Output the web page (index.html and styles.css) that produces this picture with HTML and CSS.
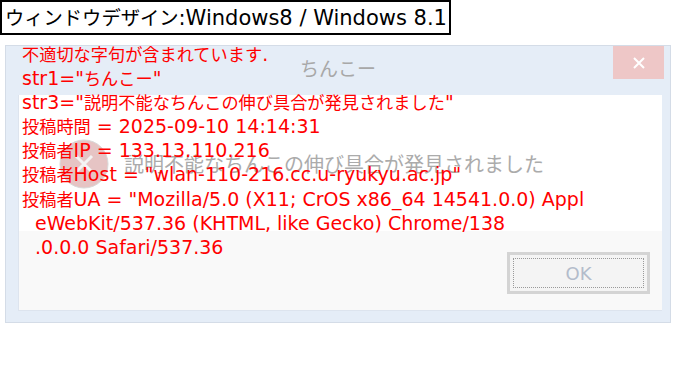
FILE: index.html
```html
<!DOCTYPE html>
<html lang="ja">
<head>
<meta charset="utf-8">
<link rel="stylesheet" href="styles.css">
</head>
<body>
<div class="label"><span class="j">ウィンドウデザイン</span>:Windows8 / Windows 8.1</div>
<div class="dialog">
  <div class="titlebar">
    <span class="title">ちんこー</span>
    <span class="close">
      <svg width="14" height="12" viewBox="0 0 14 12"><path d="M2 1 L12 11 M12 1 L2 11" stroke="#fff" stroke-width="2"/></svg>
    </span>
  </div>
  <div class="content">
    <div class="body">
      <svg class="icon" width="50" height="50" viewBox="0 0 50 50">
        <circle cx="25" cy="25" r="24" fill="#e6c4c4" stroke="#d9d9d9" stroke-width="1"/>
        <path d="M17 17 L33 33 M33 17 L17 33" stroke="#f4f4f4" stroke-width="3"/>
      </svg>
      <span class="msg">説明不能なちんこの伸び具合が発見されました</span>
    </div>
    <div class="footer">
      <button class="ok"><span class="focus">OK</span></button>
    </div>
  </div>
  <div class="alert">
    <div><span class="j">不適切な字句が含まれています</span>.</div>
    <div>str1="<span class="j">ちんこー</span>"</div>
    <div>str3="<span class="j">説明不能なちんこの伸び具合が発見されました</span>"</div>
    <div><span class="j">投稿時間</span> = 2025-09-10 14:14:31</div>
    <div><span class="j">投稿者</span>IP = 133.13.110.216</div>
    <div><span class="j">投稿者</span>Host = "wlan-110-216.cc.u-ryukyu.ac.jp"</div>
    <div><span class="j">投稿者</span>UA = "Mozilla/5.0 (X11; CrOS x86_64 14541.0.0) Appl</div>
    <div class="cont">eWebKit/537.36 (KHTML, like Gecko) Chrome/138</div>
    <div class="cont">.0.0.0 Safari/537.36</div>
  </div>
</div>
</body>
</html>
```

FILE: styles.css
```css
html, body {
  margin: 0;
  padding: 0;
  background: #fff;
}
body {
  font-family: "DejaVu Sans", "Noto Sans CJK JP", sans-serif;
  width: 680px;
  height: 368px;
  overflow: hidden;
}
.j {
  font-family: "Noto Sans CJK JP", sans-serif;
}
.label {
  display: inline-block;
  border: 2px solid #000;
  font-size: 21px;
  line-height: 30px;
  padding: 0 2px 0 3px;
  color: #000;
  white-space: nowrap;
}
.label .j {
  font-size: 19.3px;
}
.dialog {
  position: relative;
  margin: 10px 0 0 5px;
  width: 664px;
  height: 276px;
  background: #e5edf7;
  border: 1px solid #d4dce7;
  display: flex;
  flex-direction: column;
}
.titlebar {
  height: 49px;
  display: flex;
  justify-content: center;
  align-items: flex-start;
}
.title {
  margin-top: 10px;
  font-family: "Noto Sans CJK JP", sans-serif;
  font-size: 19px;
  line-height: 24px;
  color: #a8a8a8;
}
.close {
  position: absolute;
  top: 0;
  right: 6px;
  width: 51px;
  height: 33px;
  background: #eec7c7;
  display: flex;
  align-items: center;
  justify-content: center;
}
.content {
  margin: 0 8px 11px 12px;
  flex: 1;
  display: flex;
  flex-direction: column;
  border-left: 1px solid #dde4ee;
  border-bottom: 1px solid #dde4ee;
}
.body {
  height: 136px;
  background: #fff;
  display: flex;
  align-items: center;
  padding-left: 40px;
}
.icon {
  margin-top: 2px;
  flex: none;
}
.msg {
  margin-left: 15px;
  font-family: "Noto Sans CJK JP", sans-serif;
  font-size: 20px;
  color: #ababab;
}
.footer {
  flex: 1;
  background: #f9f9f9;
  display: flex;
  justify-content: flex-end;
  align-items: flex-start;
  padding: 21px 12px 0 0;
}
.ok {
  width: 143px;
  height: 42px;
  border: 3px solid #d4d4d4;
  background: #f4f4f4;
  padding: 3px;
  margin: 0;
  display: flex;
}
.focus {
  flex: 1;
  border: 1px dotted #9a9a9a;
  display: flex;
  align-items: center;
  justify-content: center;
  font-family: "DejaVu Sans", sans-serif;
  font-size: 18px;
  color: #b3bccb;
}
.alert {
  position: absolute;
  left: 16px;
  top: -4px;
  color: #ff0000;
  font-size: 19px;
  line-height: 24.1px;
  white-space: nowrap;
}
.alert .j {
  font-size: 17.2px;
}
.alert .cont {
  padding-left: 13px;
}
```
